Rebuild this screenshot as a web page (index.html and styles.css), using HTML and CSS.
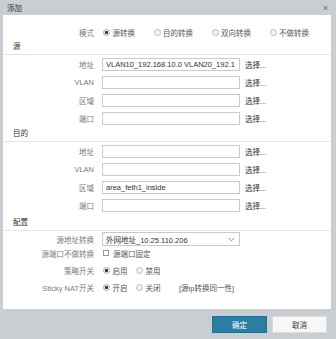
FILE: index.html
```html
<!DOCTYPE html>
<html>
<head>
<meta charset="utf-8">
<link rel="stylesheet" href="styles.css">
</head>
<body>
<div class="dialog">
  <div class="titlebar"><span class="title">添加</span><span class="close">×</span></div>
  <div class="panel">
    <div class="row mode-row">
      <span class="label">模式</span>
      <div class="options mode-options">
        <span class="opt"><span class="radio checked"></span>源转换</span>
        <span class="opt"><span class="radio"></span>目的转换</span>
        <span class="opt"><span class="radio"></span>双向转换</span>
        <span class="opt"><span class="radio"></span>不做转换</span>
      </div>
    </div>

    <div class="section-title">源</div>
    <div class="section-body">
      <div class="row"><span class="label">地址</span><span class="input">VLAN10_192.168.10.0 VLAN20_192.1</span><span class="pick">选择...</span></div>
      <div class="row"><span class="label">VLAN</span><span class="input"></span><span class="pick">选择...</span></div>
      <div class="row"><span class="label">区域</span><span class="input"></span><span class="pick">选择...</span></div>
      <div class="row"><span class="label">端口</span><span class="input"></span><span class="pick">选择...</span></div>
    </div>

    <div class="section-title">目的</div>
    <div class="section-body">
      <div class="row"><span class="label">地址</span><span class="input"></span><span class="pick">选择...</span></div>
      <div class="row"><span class="label">VLAN</span><span class="input"></span><span class="pick">选择...</span></div>
      <div class="row"><span class="label">区域</span><span class="input">area_feth1_inside</span><span class="pick">选择...</span></div>
      <div class="row"><span class="label">端口</span><span class="input"></span><span class="pick">选择...</span></div>
    </div>

    <div class="section-title config-title">配置</div>
    <div class="config-body">
      <div class="row"><span class="label">源地址转换</span>
        <span class="select"><span>外网地址_10.25.110.206</span>
          <svg class="chev" width="7" height="5" viewBox="0 0 7 5"><path d="M0.5 0.8 L3.5 3.8 L6.5 0.8" fill="none" stroke="#888" stroke-width="1"/></svg>
        </span>
      </div>
      <div class="row"><span class="label">源端口不做转换</span>
        <span class="opt"><span class="checkbox"></span>源端口固定</span>
      </div>
      <div class="row spaced"><span class="label">策略开关</span>
        <div class="options small-options">
          <span class="opt"><span class="radio checked"></span>启用</span>
          <span class="opt"><span class="radio"></span>禁用</span>
        </div>
      </div>
      <div class="row spaced"><span class="label">Sticky NAT开关</span>
        <div class="options small-options">
          <span class="opt"><span class="radio checked"></span>开启</span>
          <span class="opt"><span class="radio"></span>关闭</span>
          <span class="hint">[源ip转换同一性]</span>
        </div>
      </div>
    </div>
  </div>
  <div class="footer">
    <span class="btn primary">确定</span>
    <span class="btn">取消</span>
  </div>
</div>
</body>
</html>
```

FILE: styles.css
```css
html, body {
  margin: 0;
  padding: 0;
}
body {
  width: 336px;
  height: 339px;
  overflow: hidden;
  background: #c9ced3;
  font-family: "Liberation Sans", "Noto Sans CJK SC", sans-serif;
  font-size: 7.5px;
  color: #333;
}
.titlebar {
  height: 15px;
  display: flex;
  align-items: center;
  justify-content: space-between;
  padding: 0 8px 0 7px;
}
.title {
  color: #333;
}
.close {
  font-size: 9px;
  color: #666;
}
.panel {
  margin: 0 5px 0 3px;
  background: #fff;
  height: 294px;
  box-sizing: border-box;
  padding-top: 10px;
}
.row {
  display: flex;
  align-items: center;
  height: 14px;
}
.label {
  flex: none;
  width: 91px;
  margin-right: 8px;
  text-align: right;
  color: #7a7a7a;
}
.options {
  display: flex;
  align-items: center;
}
.mode-options {
  margin-left: 1px;
  gap: 18.5px;
}
.small-options {
  margin-left: 1px;
  gap: 8.5px;
}
.opt {
  display: flex;
  align-items: center;
  color: #555;
}
.radio {
  width: 7px;
  height: 7px;
  box-sizing: border-box;
  border-radius: 50%;
  border: 1px solid #bcbcbc;
  background: #f2f2f2;
  margin-right: 2.5px;
}
.radio.checked {
  background: radial-gradient(circle, #333 0 1.3px, #f2f2f2 1.8px);
  border-color: #aaa;
}
.checkbox {
  width: 6px;
  height: 6px;
  box-sizing: border-box;
  border: 1px solid #999;
  background: #fff;
  margin: 0 4px 0 1px;
}
.hint {
  margin-left: 10px;
  color: #555;
}
.section-title {
  padding: 1px 0 0 10px;
  line-height: 14px;
  border-bottom: 1px solid #e6e6e6;
  color: #333;
}
.config-title {
  margin-top: 2px;
}
.section-body {
  display: flex;
  flex-direction: column;
  gap: 4px;
  padding: 2px 0 1px;
}
.config-body {
  padding-top: 1px;
}
.row.spaced {
  margin-top: 3px;
}
.input {
  flex: none;
  width: 138px;
  height: 13px;
  box-sizing: border-box;
  border: 1px solid #cacaca;
  padding: 0 3px;
  line-height: 11px;
  overflow: hidden;
  white-space: nowrap;
  color: #333;
}
.pick {
  margin-left: 5px;
  color: #333;
}
.select {
  flex: none;
  width: 138px;
  height: 14px;
  box-sizing: border-box;
  border: 1px solid #cacaca;
  padding: 0 3px 0 3px;
  display: flex;
  align-items: center;
  justify-content: space-between;
  color: #333;
}
.chev {
  margin-right: 1px;
}
.footer {
  display: flex;
  justify-content: flex-end;
  gap: 5px;
  padding: 7px 9px 0 0;
}
.btn {
  width: 55px;
  height: 17px;
  box-sizing: border-box;
  display: flex;
  align-items: center;
  justify-content: center;
  background: #f7f7f7;
  border: 1px solid #dcdcdc;
  color: #333;
}
.btn.primary {
  background: #2b7ea1;
  border-color: #24708f;
  color: #fff;
}
```
